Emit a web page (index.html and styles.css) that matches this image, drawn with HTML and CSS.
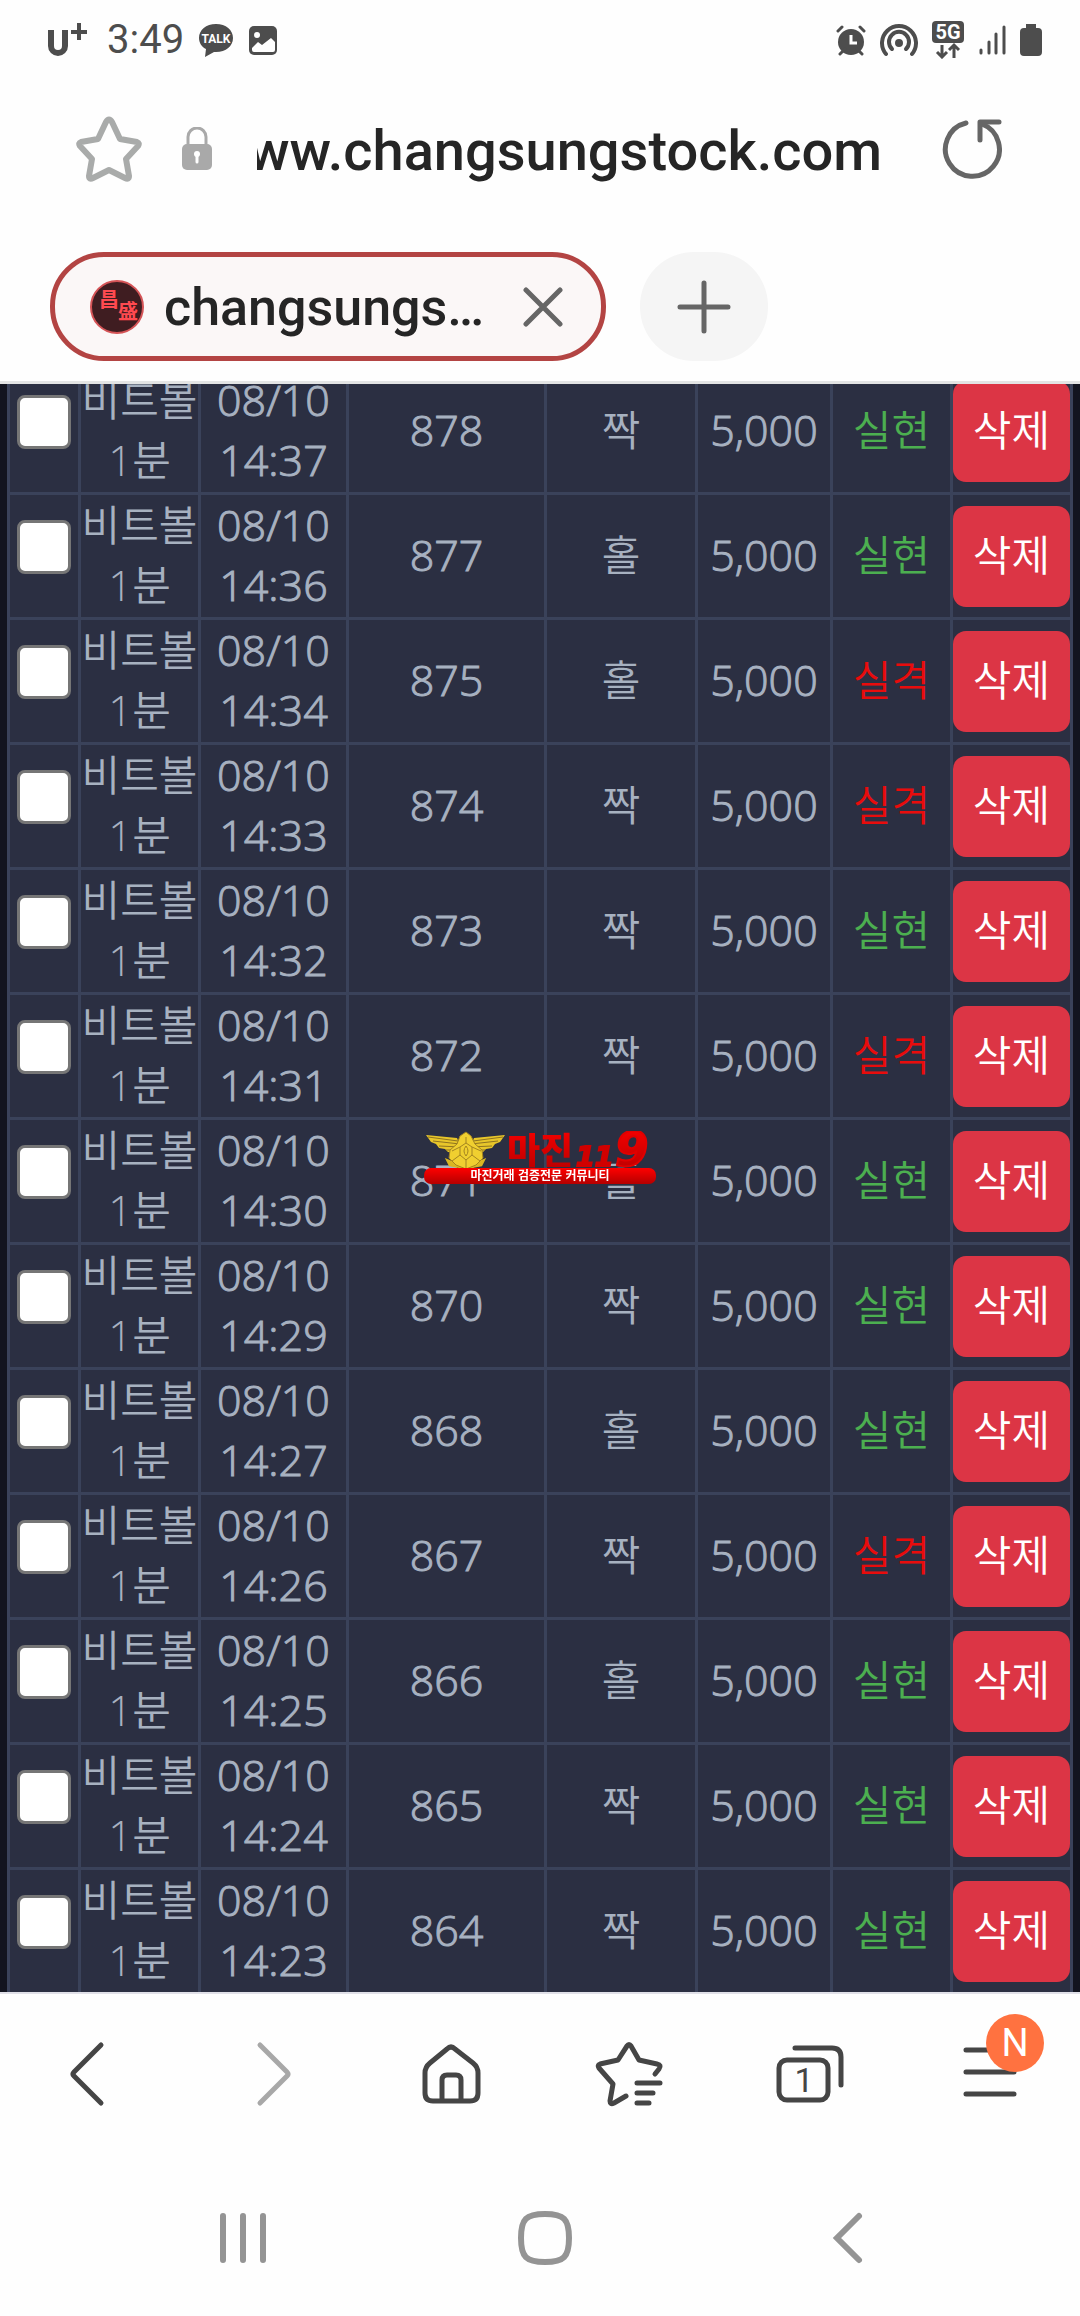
FILE: index.html
```html
<!doctype html>
<html lang="ko">
<head>
  <meta charset="utf-8">
  <meta name="viewport" content="width=device-width">
  <title>changsungstock.com</title>
  <link rel="stylesheet" href="styles.css">
</head>
<body>
  <header>
    <div class="status">
      <div class="status-group">
        <svg width="40" height="36" viewBox="0 0 40 36" fill="none" stroke="#4d4d4d"><path d="M4 8v16a7 7 0 0 0 14 0V8" stroke-width="6"/><path d="M32 1v17M24 10h17" stroke-width="4"/></svg>
        <span class="clock">3:49</span>
        <svg class="talk" width="36" height="36" viewBox="0 0 36 36"><path d="M18 2C8 2 1 8 1 16c0 5 3 9 7 11l-1 8 9-5h2c10 0 17-6 17-14S28 2 18 2z" fill="#4d4d4d"/><text x="18" y="21" class="talk-text">TALK</text></svg>
        <svg width="30" height="32" viewBox="0 0 30 32"><rect x="1" y="2" width="28" height="29" rx="5" fill="#4d4d4d"/><circle cx="9" cy="11" r="3" fill="#fff"/><path d="M4 24l6-6 4 3 9-7 4 4v8q0 2-2 2H6q-2 0-2-2z" fill="#fff"/></svg>
      </div>
      <div class="status-group right">
        <svg width="30" height="32" viewBox="0 0 30 32"><circle cx="15" cy="18" r="13" fill="#4d4d4d"/><path d="M2 7l4-4M28 7l-4-4M4 30l5-5M26 30l-5-5" stroke="#4d4d4d" stroke-width="3" stroke-linecap="round"/><path d="M15 11v8h6" stroke="#fff" stroke-width="3" fill="none"/></svg>
        <svg width="38" height="34" viewBox="0 0 38 34" fill="none" stroke="#4d4d4d" stroke-width="4" stroke-linecap="round"><path d="M6 31a17 17 0 1 1 26 0"/><path d="M12 26a10 10 0 1 1 14 0"/><circle cx="19" cy="20" r="2"/></svg>
        <svg width="32" height="38" viewBox="0 0 32 38"><rect width="32" height="22" rx="4" fill="#4d4d4d"/><text x="16" y="18" class="net-text">5G</text><path d="M10 24v12M5 31l5 5 5-5M22 37V24M17 29l5-5 5 5" fill="none" stroke="#4d4d4d" stroke-width="3"/></svg>
        <svg width="28" height="32" viewBox="0 0 28 32" stroke="#4d4d4d" stroke-width="3" stroke-linecap="round"><path d="M3 26v3M11 18v11M18 10v19M26 3v26"/></svg>
        <svg width="22" height="34" viewBox="0 0 22 34"><path d="M6 1h10v4h2q4 0 4 4v20q0 4-4 4H4q-4 0-4-4V9q0-4 4-4h2z" fill="#4d4d4d"/></svg>
      </div>
    </div>

    <div class="address">
      <button class="icon-btn" aria-label="Bookmark">
        <svg width="66" height="66" viewBox="0 0 66 66" fill="none" stroke="#a9abaa" stroke-width="6" stroke-linejoin="round"><path d="M30 6q3-5 6 0l8 17 17 3q3 1 1 4L50 43l3 17q0 4-4 2L33 54 17 62q-4 2-4-2l3-17L4 30q-2-3 1-4l17-3z"/></svg>
      </button>
      <svg width="32" height="44" viewBox="0 0 32 44"><path d="M7 20V10a9 9 0 0 1 18 0v10" fill="none" stroke="#a9a9a9" stroke-width="3"/><rect x="1" y="17" width="30" height="26" rx="5" fill="#a9a9a9"/><circle cx="16" cy="27" r="3" fill="#fff"/><path d="M16 28v7" stroke="#fff" stroke-width="3" stroke-linecap="round"/></svg>
      <input class="url" type="text" value="www.changsungstock.com" aria-label="Address">
      <button class="icon-btn" aria-label="Reload">
        <svg width="60" height="62" viewBox="0 0 60 62" fill="none" stroke="#666" stroke-width="5" stroke-linecap="round" stroke-linejoin="round"><path d="M24 5A27 27 0 1 0 40 6"/><path d="M57 4H38v18"/></svg>
      </button>
    </div>

    <div class="tabs">
      <div class="tab">
        <svg width="54" height="56" viewBox="0 0 54 56"><circle cx="27" cy="28" r="26" fill="#3f1d21" stroke="#d55457" stroke-width="2"/><g class="seal"><text x="9" y="28">昌</text><text x="28" y="40">盛</text></g></svg>
        <span class="tab-title">changsungstock.com</span>
        <button class="icon-btn" aria-label="Close tab">
          <svg width="40" height="40" viewBox="0 0 40 40" stroke="#666" stroke-width="5" stroke-linecap="round"><path d="M3 3l34 34M37 3L3 37"/></svg>
        </button>
      </div>
      <button class="new-tab" aria-label="New tab">
        <svg width="54" height="54" viewBox="0 0 54 54" stroke="#666" stroke-width="5" stroke-linecap="round"><path d="M27 3v48M3 27h48"/></svg>
      </button>
    </div>
  </header>

  <main>
    <table>
      <colgroup>
        <col class="c-check"><col class="c-game"><col class="c-date"><col><col class="c-pick"><col class="c-amount"><col class="c-result"><col class="c-action">
      </colgroup>
      <tbody>
        <tr>
          <td class="check"><input type="checkbox" aria-label="878"></td>
          <td class="kr">비트볼<br>1분</td><td>08/10<br>14:37</td><td>878</td><td class="kr">짝</td><td>5,000</td>
          <td class="kr win">실현</td>
          <td class="action"><button class="delete">삭제</button></td>
        </tr>
        <tr>
          <td class="check"><input type="checkbox" aria-label="877"></td>
          <td class="kr">비트볼<br>1분</td><td>08/10<br>14:36</td><td>877</td><td class="kr">홀</td><td>5,000</td>
          <td class="kr win">실현</td>
          <td class="action"><button class="delete">삭제</button></td>
        </tr>
        <tr>
          <td class="check"><input type="checkbox" aria-label="875"></td>
          <td class="kr">비트볼<br>1분</td><td>08/10<br>14:34</td><td>875</td><td class="kr">홀</td><td>5,000</td>
          <td class="kr lose">실격</td>
          <td class="action"><button class="delete">삭제</button></td>
        </tr>
        <tr>
          <td class="check"><input type="checkbox" aria-label="874"></td>
          <td class="kr">비트볼<br>1분</td><td>08/10<br>14:33</td><td>874</td><td class="kr">짝</td><td>5,000</td>
          <td class="kr lose">실격</td>
          <td class="action"><button class="delete">삭제</button></td>
        </tr>
        <tr>
          <td class="check"><input type="checkbox" aria-label="873"></td>
          <td class="kr">비트볼<br>1분</td><td>08/10<br>14:32</td><td>873</td><td class="kr">짝</td><td>5,000</td>
          <td class="kr win">실현</td>
          <td class="action"><button class="delete">삭제</button></td>
        </tr>
        <tr>
          <td class="check"><input type="checkbox" aria-label="872"></td>
          <td class="kr">비트볼<br>1분</td><td>08/10<br>14:31</td><td>872</td><td class="kr">짝</td><td>5,000</td>
          <td class="kr lose">실격</td>
          <td class="action"><button class="delete">삭제</button></td>
        </tr>
        <tr>
          <td class="check"><input type="checkbox" aria-label="871"></td>
          <td class="kr">비트볼<br>1분</td><td>08/10<br>14:30</td><td>871</td><td class="kr">홀</td><td>5,000</td>
          <td class="kr win">실현</td>
          <td class="action"><button class="delete">삭제</button></td>
        </tr>
        <tr>
          <td class="check"><input type="checkbox" aria-label="870"></td>
          <td class="kr">비트볼<br>1분</td><td>08/10<br>14:29</td><td>870</td><td class="kr">짝</td><td>5,000</td>
          <td class="kr win">실현</td>
          <td class="action"><button class="delete">삭제</button></td>
        </tr>
        <tr>
          <td class="check"><input type="checkbox" aria-label="868"></td>
          <td class="kr">비트볼<br>1분</td><td>08/10<br>14:27</td><td>868</td><td class="kr">홀</td><td>5,000</td>
          <td class="kr win">실현</td>
          <td class="action"><button class="delete">삭제</button></td>
        </tr>
        <tr>
          <td class="check"><input type="checkbox" aria-label="867"></td>
          <td class="kr">비트볼<br>1분</td><td>08/10<br>14:26</td><td>867</td><td class="kr">짝</td><td>5,000</td>
          <td class="kr lose">실격</td>
          <td class="action"><button class="delete">삭제</button></td>
        </tr>
        <tr>
          <td class="check"><input type="checkbox" aria-label="866"></td>
          <td class="kr">비트볼<br>1분</td><td>08/10<br>14:25</td><td>866</td><td class="kr">홀</td><td>5,000</td>
          <td class="kr win">실현</td>
          <td class="action"><button class="delete">삭제</button></td>
        </tr>
        <tr>
          <td class="check"><input type="checkbox" aria-label="865"></td>
          <td class="kr">비트볼<br>1분</td><td>08/10<br>14:24</td><td>865</td><td class="kr">짝</td><td>5,000</td>
          <td class="kr win">실현</td>
          <td class="action"><button class="delete">삭제</button></td>
        </tr>
        <tr>
          <td class="check"><input type="checkbox" aria-label="864"></td>
          <td class="kr">비트볼<br>1분</td><td>08/10<br>14:23</td><td>864</td><td class="kr">짝</td><td>5,000</td>
          <td class="kr win">실현</td>
          <td class="action"><button class="delete">삭제</button></td>
        </tr>
      </tbody>
    </table>
  </main>

  <!-- centered watermark -->
  <svg class="watermark" width="232" height="54" viewBox="0 0 232 54">
    <defs>
      <linearGradient id="red" x1="0" y1="0" x2="0" y2="1"><stop offset="0" stop-color="#f00"/><stop offset="1" stop-color="#b40000"/></linearGradient>
    </defs>
    <path d="M2 4l31 3 5 12-5 3-9-1-3-3-6-1-3-4-5-2zM81 4L50 7l-5 12 5 3 9-1 3-3 6-1 3-4 5-2z" fill="#e8c62a"/>
    <path d="M4 6l30 4M9 10l27 3M15 15l22 1M22 19h15M79 6l-30 4M74 10l-27 3M68 15l-22 1M61 19H46" stroke="#8f7420"/>
    <path d="M24 30l14 6-12-2zM59 30l-14 6 12-2z" stroke="#d9b622" stroke-width="3"/>
    <path d="M42 1l5 4 4 8 7 6 1 8-7 7-10 4-10-4-7-7 1-8 7-6 3-8z" fill="#f0cf30" stroke="#a38420"/>
    <path d="M42 12l6 4v8l-6 5-6-5v-8zM36 16l-8 4M48 16l9 4M36 24l-8 6M48 24l8 6M42 29v8M42 6v6M42 15q-4 5 0 10q4-5 0-10" fill="none" stroke="#a38420"/>
    <text x="83" y="33" class="wm-title">마진</text>
    <text x="152" y="35" class="wm-num">11</text>
    <text x="191" y="35" class="wm-nine">9</text>
    <rect y="37" width="232" height="16" rx="7" fill="url(#red)"/>
    <text x="116" y="49" class="wm-sub">마진거래 검증전문 커뮤니티</text>
  </svg>

  <footer>
    <nav class="toolbar">
      <button class="icon-btn" aria-label="Back"><svg width="72" height="72" viewBox="0 0 72 72"><path d="M47 7L20 34q-2 2 0 4l27 27"/></svg></button>
      <button class="icon-btn" aria-label="Forward" disabled><svg width="72" height="72" viewBox="0 0 72 72"><path d="M26 7l27 27q2 2 0 4L26 65"/></svg></button>
      <button class="icon-btn" aria-label="Home"><svg width="72" height="72" viewBox="0 0 72 72"><path d="M33 11q4-4 8 0l18 14q5 4 5 10v20q0 8-8 8H19q-8 0-8-8V35q0-6 5-10zM28 63V42q0-5 5-5h9q5 0 5 5v21"/></svg></button>
      <button class="icon-btn" aria-label="Bookmarks"><svg width="72" height="72" viewBox="0 0 72 72"><path d="M61 36l4-5q3-4-2-5l-18-4-8-14q-2-3-4 0l-9 14-18 4q-3 1-1 4l14 16-3 17q0 4 4 2l12-7M43 45h23M43 55h16M43 65h12"/></svg></button>
      <button class="icon-btn" aria-label="Tabs"><svg width="72" height="72" viewBox="0 0 72 72"><rect x="5" y="22" width="49" height="40" rx="8"/><path d="M21 10h37q9 0 9 9v28"/><text x="30" y="54" class="tab-count">1</text></svg></button>
      <button class="icon-btn" aria-label="Menu"><svg width="72" height="72" viewBox="0 0 72 72"><path d="M12 12h48M12 34h48M12 56h48"/></svg><span class="badge">N</span></button>
    </nav>
    <nav class="system">
      <button class="icon-btn" aria-label="Recents"><svg width="56" height="56" viewBox="0 0 56 56"><path d="M8 6v44M28 6v44M48 6v44"/></svg></button>
      <button class="icon-btn" aria-label="Home screen"><svg width="56" height="56" viewBox="0 0 56 56"><path d="M28 4c19 0 24 5 24 24s-5 24-24 24S4 47 4 28 9 4 28 4z"/></svg></button>
      <button class="icon-btn" aria-label="System back"><svg width="56" height="56" viewBox="0 0 56 56"><path d="M40 6L18 28l22 22"/></svg></button>
    </nav>
  </footer>
</body>
</html>
```
FILE: styles.css
```css
* {
  box-sizing: border-box;
}
html, body {
  height: 100%;
  margin: 0;
}
body {
  display: flex;
  flex-direction: column;
  overflow: hidden;
  background: #fefefe;
  font-family: Roboto, "Noto Sans CJK KR", sans-serif;
}
svg {
  display: block;
  flex: none;
}
button {
  font: inherit;
  border: 0;
  padding: 0;
}
.icon-btn {
  position: relative;
  background: none;
}

/* browser chrome */
header {
  border-bottom: 3px solid #e3e4e4;
}
.status {
  display: flex;
  justify-content: space-between;
  align-items: center;
  height: 80px;
  padding: 0 38px 0 47px;
}
.status-group {
  display: flex;
  align-items: center;
  gap: 14px;
}
.clock {
  margin-left: 6px;
  font-size: 40px;
  line-height: 48px;
  color: #4d4d4d;
}
.talk-text {
  font: 700 12px Roboto, sans-serif;
  text-anchor: middle;
  fill: #fff;
}
.net-text {
  font: 700 20px Roboto, sans-serif;
  text-anchor: middle;
  fill: #fff;
}
.address {
  display: flex;
  align-items: center;
  height: 137px;
  padding: 0 78px 0 76px;
  gap: 39px;
}
.url {
  flex: 1;
  min-width: 0;
  margin: 0 21px 0 5px;
  padding: 4px 0 0;
  border: 0;
  background: none;
  direction: rtl;
  font: 500 56px/72px Roboto, sans-serif;
  color: #252525;
}
.tabs {
  display: flex;
  gap: 34px;
  padding: 35px 50px 20px;
}
.tab {
  display: flex;
  align-items: center;
  width: 556px;
  height: 109px;
  padding: 0 38px 0 35px;
  border: 5px solid #b34443;
  border-radius: 54px;
  background: #fbf7f7;
}
.tab-title {
  flex: 1;
  margin: 0 38px 0 20px;
  padding-top: 2px;
  overflow: hidden;
  text-overflow: ellipsis;
  white-space: nowrap;
  font-size: 52px;
  font-weight: 500;
  line-height: 72px;
  color: #252525;
}
.seal {
  font: 700 20px "Noto Sans CJK KR", sans-serif;
  fill: #ff4a50;
}
.new-tab {
  display: flex;
  align-items: center;
  justify-content: center;
  width: 128px;
  height: 109px;
  border-radius: 54px;
  background: #f5f5f5;
}

/* page content, scrolled a little into the first row */
main {
  flex: 1;
  min-height: 0;
  overflow: hidden;
  padding: 0 7px;
  background: #12141f;
}
table {
  width: 100%;
  margin-top: -17px;
  table-layout: fixed;
  border-collapse: collapse;
  background: #2b2f42;
  font-family: "Open Sans", "Noto Sans CJK KR", sans-serif;
  font-size: 43px;
  font-weight: 350;
  line-height: 60px;
  color: #a7b1c0;
}
.c-check { width: 71px; }
.c-game { width: 120px; }
.c-date { width: 148px; }
.c-pick { width: 151px; }
.c-amount { width: 135px; }
.c-result { width: 120px; }
.c-action { width: 120px; }
td {
  height: 125px;
  padding: 0 0 2px;
  border: 3px solid #3a425a;
  text-align: center;
  vertical-align: middle;
  white-space: nowrap;
  -webkit-text-stroke: 1px;
}
.kr {
  font-size: 42px;
  -webkit-text-stroke: 0;
}
.check {
  padding: 25px 0 0;
  vertical-align: top;
}
.check input {
  display: block;
  appearance: none;
  width: 54px;
  height: 54px;
  margin: 0 auto;
  border: 3px solid #767676;
  border-radius: 8px;
  background: #fff;
}
.win {
  color: #4caf50;
}
.lose {
  color: #e80c0c;
}
.action {
  padding: 0;
  -webkit-text-stroke: 0;
}
.delete {
  display: block;
  width: 100%;
  height: 101px;
  padding-bottom: 2px;
  border-radius: 13px;
  background: #dc3545;
  color: #fff;
  font-size: 42px;
}

.watermark {
  position: fixed;
  top: 50%;
  left: 50%;
  transform: translate(-50%, -50%);
}
.wm-title {
  font: 900 36px "Noto Sans CJK KR", sans-serif;
  fill: url(#red);
}
.wm-num {
  font: italic 700 27px "DejaVu Sans", sans-serif;
  fill: #d00000;
  stroke: #d00000;
  stroke-width: 2px;
}
.wm-nine {
  font: italic 700 48px "DejaVu Sans", sans-serif;
  fill: url(#red);
  stroke: #e00000;
  stroke-width: 2px;
}
.wm-sub {
  font: 700 12px "Noto Sans CJK KR", sans-serif;
  text-anchor: middle;
  fill: #fff;
}

/* bottom bars */
.toolbar {
  display: grid;
  grid-template-columns: repeat(6, 1fr);
  justify-items: center;
  align-items: center;
  height: 162px;
  border-top: 2px solid #e0e0e8;
}
.toolbar svg {
  fill: none;
  stroke: #454545;
  stroke-width: 5px;
  stroke-linecap: round;
  stroke-linejoin: round;
}
.toolbar button:disabled svg {
  stroke: #a8a8a8;
}
.toolbar .tab-count {
  font: 400 34px Roboto, sans-serif;
  text-anchor: middle;
  fill: #454545;
  stroke: none;
}
.badge {
  position: absolute;
  top: -24px;
  right: -18px;
  width: 58px;
  height: 58px;
  border-radius: 50%;
  background: #ff7240;
  color: #fff;
  font-size: 38px;
  line-height: 58px;
}
.system {
  display: grid;
  grid-template-columns: repeat(3, 1fr);
  justify-items: center;
  align-items: center;
  height: 162px;
  padding: 6px 82px 0 92px;
}
.system svg {
  fill: none;
  stroke: #949494;
  stroke-width: 6px;
  stroke-linecap: round;
}
```
